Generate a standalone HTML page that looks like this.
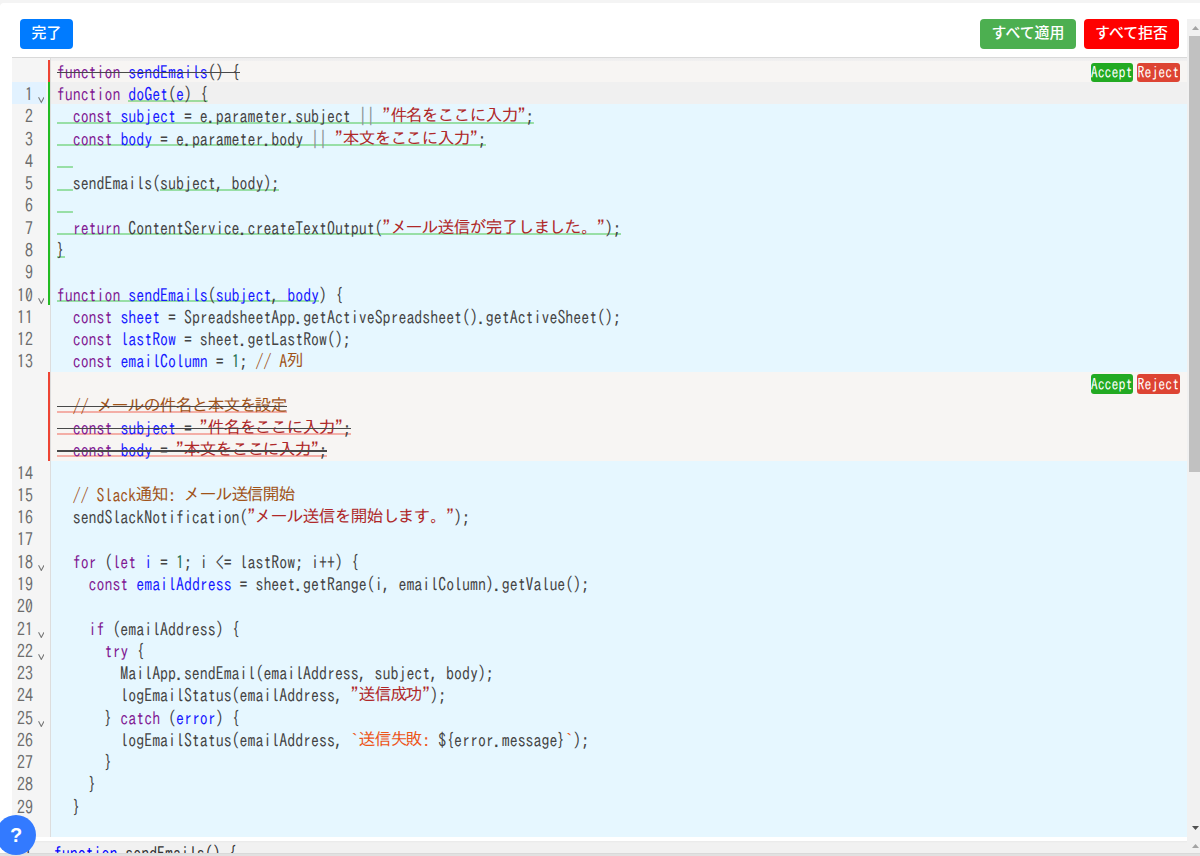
<!DOCTYPE html>
<html lang="ja">
<head>
<meta charset="utf-8">
<title>Diff</title>
<style>
html,body{margin:0;padding:0;}
body{width:1200px;height:856px;overflow:hidden;position:relative;background:#f4f4f4;
  font-family:"Liberation Sans","Noto Sans CJK JP",sans-serif;color:#212529;}
.panel{position:absolute;left:0;top:2.7px;width:1200px;height:850.3px;background:#fff;border-radius:4px 0 0 0;}
.btn{position:absolute;top:19px;height:30px;box-sizing:border-box;border:0;border-radius:4px;color:#fff;
  font-family:"Liberation Sans","Noto Sans CJK JP",sans-serif;font-size:14.9px;font-weight:500;line-height:29px;text-align:center;padding:0;}
.b-done{left:20px;width:53px;background:#007bff;}
.b-apply{left:980px;width:96px;background:#4caf50;}
.b-reject{left:1084px;width:95px;background:#ff0000;}

/* editor */
.editor{position:absolute;left:12px;top:57px;width:1175px;height:779.75px;overflow:hidden;background:#fff;
  font-family:"IPAGothic","Noto Sans Mono CJK JP","Liberation Mono",monospace;font-size:15.907px;line-height:22.270px;color:#444;}
.gutter{position:absolute;left:0;top:0;width:37.5px;height:100%;background:#f5f5f5;border-right:1px solid #ddd;}
.rows{position:absolute;left:0;top:2.9px;width:100%;}
.row{position:relative;height:22.270px;white-space:pre;}
.ln{position:absolute;left:0;top:0;width:21px;text-align:right;color:#6c6c6c;}
.fold{position:absolute;left:25.9px;top:15px;width:6.6px;height:6.4px;}
.mk{position:absolute;left:36px;top:0;width:2.2px;height:100%;}
.mk.g{background:#22bb22;}
.mk.r{background:#ee4433;}
.code{position:absolute;left:38.5px;right:0;top:0;height:100%;padding-left:6.3px;background:#e6f7ff;}
.row.del .code{background:#f7f5f3;}
.row.act .code{background:#f0f0f0;}
.row.act .lnbg{position:absolute;left:0;top:0;width:34.2px;height:100%;background:#e2f2ff;}
.k{color:#811a93}.d{color:#171aff}.s{color:#af2829}.c{color:#a05319}.n{color:#267355}.t{color:#ed5519}.o{color:#8d9499}
.ch{background:linear-gradient(rgba(34,187,34,.4),rgba(34,187,34,.4)) bottom/100% 2px no-repeat;padding-bottom:.5px;}
.dl{position:relative;}
.dl::after{content:"";position:absolute;left:0;right:0;top:8.7px;height:1.5px;background:#484848;}
b.j{font-weight:normal;display:inline-block;transform:scale(1.07,1.06);transform-origin:50% 80%;}
b.x{font-weight:normal;display:inline-block;transform:scaleY(1.16);transform-origin:0 24%;}
.dt{background:linear-gradient(rgba(238,68,51,.4),rgba(238,68,51,.4)) bottom/100% 2px no-repeat;padding-bottom:0;}
.cb{position:absolute;right:0;top:3px;height:19px;width:100px;}
.cb span{position:absolute;top:0;height:19.4px;line-height:19.4px;border-radius:3px;color:#fff;text-align:center;
  font-family:"IPAGothic","Noto Sans Mono CJK JP","Liberation Mono",monospace;font-size:13.9px;white-space:nowrap;overflow:hidden;}
.cb.c2{top:2.4px;}
.cb.c2 span{height:19.8px;line-height:19px;}
.cb .a{left:3.6px;width:42.5px;box-sizing:border-box;padding-right:.6px;}
.cb .j{left:50.1px;width:42.9px;box-sizing:border-box;padding-right:.4px;}
.cb .a{background:#22aa22;}
.cb .j{background:#dd4433;}
.shadow{position:absolute;left:12px;top:57px;width:1175px;height:4.2px;background:linear-gradient(#d9d9d9,#d9d9d9) 0 0/100% 1.2px no-repeat,linear-gradient(#ececee,#f1f0f0) 38.5px 0/100% 100% no-repeat;}

/* scrollbars */
.sb{position:absolute;left:1187px;width:17px;background:#f1f1f1;}
.sb1{top:19px;height:818px;}
.sb2{top:837px;height:40px;}
.thumb{position:absolute;left:2px;width:13px;background:#c1c1c1;}
.arr{position:absolute;left:5px;width:7px;height:4px;}

/* bottom */
.strip{position:absolute;left:12px;top:841px;width:1175px;height:12px;background:#f1f1f1;overflow:hidden;
  font-family:"IPAGothic","Noto Sans Mono CJK JP","Liberation Mono",monospace;font-size:15.907px;line-height:22.270px;color:#333;white-space:pre;}
.strip .sh{position:absolute;left:0;top:0;width:100%;height:2px;background:linear-gradient(rgba(0,0,0,.035),rgba(0,0,0,0));}
.strip .t1{position:absolute;left:41.8px;top:-0.5px;}
.strip .n1{position:absolute;left:12px;top:-0.5px;color:#333;}
.botband{position:absolute;left:0;top:853px;width:1200px;height:3px;background:#e1e1e1;border-top:1px solid #d9d9d9;box-sizing:border-box;}
.help{position:absolute;left:-4px;top:815px;width:40px;height:40px;border-radius:50%;background:#337aff;color:#fff;
  font-family:"Liberation Sans",sans-serif;font-weight:bold;font-size:20px;line-height:40px;text-align:center;}
</style>
</head>
<body>
<div class="panel"></div>
<div class="btn b-done">完了</div>
<div class="btn b-apply">すべて適用</div>
<div class="btn b-reject">すべて拒否</div>

<div class="editor">
<div class="gutter"></div>
<div class="rows">
<div class="row del first"><i class="mk r"></i><div class="code"><span class="dl"><span class="k"><b class="x">function</b></span> <span class="d"><b class="x">sendEmails</b></span><b class="x">() {</b></span><div class="cb"><span class="a"><b class="x">Accept</b></span><span class="j"><b class="x">Reject</b></span></div></div></div>
<div class="row act"><i class="lnbg"></i><span class="ln"><b class="x">1</b></span><svg class="fold" viewBox="0 0 7 7"><path d="M0.5 0.3 L3.5 6 L6.5 0.3" fill="none" stroke="#757575" stroke-width="1.15"/></svg><i class="mk g"></i><div class="code"><span class="k"><b class="x">function</b></span> <span class="ch"><span class="d"><b class="x">doGet</b></span><b class="x">(</b><span class="d"><b class="x">e</b></span><b class="x">) {</b></span></div></div>
<div class="row"><span class="ln"><b class="x">2</b></span><i class="mk g"></i><div class="code"><span class="ch">  <span class="k"><b class="x">const</b></span> <span class="d"><b class="x">subject</b></span><b class="x"> = e.parameter.subject </b><span class="o"><b class="x">||</b></span> <span class="s"><b class="x">"</b><b class="j">件</b><b class="j">名</b><b class="j">を</b><b class="j">こ</b><b class="j">こ</b><b class="j">に</b><b class="j">入</b><b class="j">力</b><b class="x">"</b></span><b class="x">;</b></span></div></div>
<div class="row"><span class="ln"><b class="x">3</b></span><i class="mk g"></i><div class="code"><span class="ch">  <span class="k"><b class="x">const</b></span> <span class="d"><b class="x">body</b></span><b class="x"> = e.parameter.body </b><span class="o"><b class="x">||</b></span> <span class="s"><b class="x">"</b><b class="j">本</b><b class="j">文</b><b class="j">を</b><b class="j">こ</b><b class="j">こ</b><b class="j">に</b><b class="j">入</b><b class="j">力</b><b class="x">"</b></span><b class="x">;</b></span></div></div>
<div class="row"><span class="ln"><b class="x">4</b></span><i class="mk g"></i><div class="code"><span class="ch">  </span></div></div>
<div class="row"><span class="ln"><b class="x">5</b></span><i class="mk g"></i><div class="code"><span class="ch">  </span><b class="x">sendEmails(</b><span class="ch"><b class="x">subject, body);</b></span></div></div>
<div class="row"><span class="ln"><b class="x">6</b></span><i class="mk g"></i><div class="code"><span class="ch">  </span></div></div>
<div class="row"><span class="ln"><b class="x">7</b></span><i class="mk g"></i><div class="code"><span class="ch">  <span class="k"><b class="x">return</b></span><b class="x"> ContentService.createTextOutput(</b><span class="s"><b class="x">"</b><b class="j">メ</b><b class="j">ー</b><b class="j">ル</b><b class="j">送</b><b class="j">信</b><b class="j">が</b><b class="j">完</b><b class="j">了</b><b class="j">し</b><b class="j">ま</b><b class="j">し</b><b class="j">た</b>。<b class="x">"</b></span><b class="x">);</b></span></div></div>
<div class="row"><span class="ln"><b class="x">8</b></span><i class="mk g"></i><div class="code"><span class="ch"><b class="x">}</b></span></div></div>
<div class="row"><span class="ln"><b class="x">9</b></span><i class="mk g"></i><div class="code"></div></div>
<div class="row"><span class="ln"><b class="x">10</b></span><svg class="fold" viewBox="0 0 7 7"><path d="M0.5 0.3 L3.5 6 L6.5 0.3" fill="none" stroke="#757575" stroke-width="1.15"/></svg><i class="mk g"></i><div class="code"><span class="ch"><span class="k"><b class="x">function</b></span> <span class="d"><b class="x">sendEmails</b></span><b class="x">(</b><span class="d"><b class="x">subject</b></span><b class="x">, </b><span class="d"><b class="x">body</b></span></span><b class="x">) {</b></div></div>
<div class="row"><span class="ln"><b class="x">11</b></span><div class="code">  <span class="k"><b class="x">const</b></span> <span class="d"><b class="x">sheet</b></span><b class="x"> = SpreadsheetApp.getActiveSpreadsheet().getActiveSheet();</b></div></div>
<div class="row"><span class="ln"><b class="x">12</b></span><div class="code">  <span class="k"><b class="x">const</b></span> <span class="d"><b class="x">lastRow</b></span><b class="x"> = sheet.getLastRow();</b></div></div>
<div class="row"><span class="ln"><b class="x">13</b></span><div class="code">  <span class="k"><b class="x">const</b></span> <span class="d"><b class="x">emailColumn</b></span><b class="x"> = </b><span class="n"><b class="x">1</b></span><b class="x">; </b><span class="c"><b class="x">// A</b><b class="j">列</b></span></div></div>
<div class="row del"><i class="mk r"></i><div class="code"><div class="cb c2"><span class="a"><b class="x">Accept</b></span><span class="j"><b class="x">Reject</b></span></div></div></div>
<div class="row del"><i class="mk r"></i><div class="code"><span class="dl"><span class="dt">  <span class="c"><b class="x">// </b><b class="j">メ</b><b class="j">ー</b><b class="j">ル</b><b class="j">の</b><b class="j">件</b><b class="j">名</b><b class="j">と</b><b class="j">本</b><b class="j">文</b><b class="j">を</b><b class="j">設</b><b class="j">定</b></span></span></span></div></div>
<div class="row del"><i class="mk r"></i><div class="code"><span class="dl"><span class="dt">  <span class="k"><b class="x">const</b></span> <span class="d"><b class="x">subject</b></span><b class="x"> = </b><span class="s"><b class="x">"</b><b class="j">件</b><b class="j">名</b><b class="j">を</b><b class="j">こ</b><b class="j">こ</b><b class="j">に</b><b class="j">入</b><b class="j">力</b><b class="x">"</b></span><b class="x">;</b></span></span></div></div>
<div class="row del"><i class="mk r"></i><div class="code"><span class="dl"><span class="dt">  <span class="k"><b class="x">const</b></span> <span class="d"><b class="x">body</b></span><b class="x"> = </b><span class="s"><b class="x">"</b><b class="j">本</b><b class="j">文</b><b class="j">を</b><b class="j">こ</b><b class="j">こ</b><b class="j">に</b><b class="j">入</b><b class="j">力</b><b class="x">"</b></span><b class="x">;</b></span></span></div></div>
<div class="row"><span class="ln"><b class="x">14</b></span><div class="code"></div></div>
<div class="row"><span class="ln"><b class="x">15</b></span><div class="code">  <span class="c"><b class="x">// Slack</b><b class="j">通</b><b class="j">知</b><b class="x">: </b><b class="j">メ</b><b class="j">ー</b><b class="j">ル</b><b class="j">送</b><b class="j">信</b><b class="j">開</b><b class="j">始</b></span></div></div>
<div class="row"><span class="ln"><b class="x">16</b></span><div class="code"><b class="x">  sendSlackNotification(</b><span class="s"><b class="x">"</b><b class="j">メ</b><b class="j">ー</b><b class="j">ル</b><b class="j">送</b><b class="j">信</b><b class="j">を</b><b class="j">開</b><b class="j">始</b><b class="j">し</b><b class="j">ま</b><b class="j">す</b>。<b class="x">"</b></span><b class="x">);</b></div></div>
<div class="row"><span class="ln"><b class="x">17</b></span><div class="code"></div></div>
<div class="row"><span class="ln"><b class="x">18</b></span><svg class="fold" viewBox="0 0 7 7"><path d="M0.5 0.3 L3.5 6 L6.5 0.3" fill="none" stroke="#757575" stroke-width="1.15"/></svg><div class="code">  <span class="k"><b class="x">for</b></span><b class="x"> (</b><span class="k"><b class="x">let</b></span> <span class="d"><b class="x">i</b></span><b class="x"> = </b><span class="n"><b class="x">1</b></span><b class="x">; i &lt;= lastRow; i++) {</b></div></div>
<div class="row"><span class="ln"><b class="x">19</b></span><div class="code">    <span class="k"><b class="x">const</b></span> <span class="d"><b class="x">emailAddress</b></span><b class="x"> = sheet.getRange(i, emailColumn).getValue();</b></div></div>
<div class="row"><span class="ln"><b class="x">20</b></span><div class="code"></div></div>
<div class="row"><span class="ln"><b class="x">21</b></span><svg class="fold" viewBox="0 0 7 7"><path d="M0.5 0.3 L3.5 6 L6.5 0.3" fill="none" stroke="#757575" stroke-width="1.15"/></svg><div class="code">    <span class="k"><b class="x">if</b></span><b class="x"> (emailAddress) {</b></div></div>
<div class="row"><span class="ln"><b class="x">22</b></span><svg class="fold" viewBox="0 0 7 7"><path d="M0.5 0.3 L3.5 6 L6.5 0.3" fill="none" stroke="#757575" stroke-width="1.15"/></svg><div class="code">      <span class="k"><b class="x">try</b></span><b class="x"> {</b></div></div>
<div class="row"><span class="ln"><b class="x">23</b></span><div class="code"><b class="x">        MailApp.sendEmail(emailAddress, subject, body);</b></div></div>
<div class="row"><span class="ln"><b class="x">24</b></span><div class="code"><b class="x">        logEmailStatus(emailAddress, </b><span class="s"><b class="x">"</b><b class="j">送</b><b class="j">信</b><b class="j">成</b><b class="j">功</b><b class="x">"</b></span><b class="x">);</b></div></div>
<div class="row"><span class="ln"><b class="x">25</b></span><svg class="fold" viewBox="0 0 7 7"><path d="M0.5 0.3 L3.5 6 L6.5 0.3" fill="none" stroke="#757575" stroke-width="1.15"/></svg><div class="code"><b class="x">      } </b><span class="k"><b class="x">catch</b></span><b class="x"> (</b><span class="d"><b class="x">error</b></span><b class="x">) {</b></div></div>
<div class="row"><span class="ln"><b class="x">26</b></span><div class="code"><b class="x">        logEmailStatus(emailAddress, </b><span class="t"><b class="x">`</b><b class="j">送</b><b class="j">信</b><b class="j">失</b><b class="j">敗</b><b class="x">: </b></span><b class="x">${error.message}</b><span class="t"><b class="x">`</b></span><b class="x">);</b></div></div>
<div class="row"><span class="ln"><b class="x">27</b></span><div class="code"><b class="x">      }</b></div></div>
<div class="row"><span class="ln"><b class="x">28</b></span><div class="code"><b class="x">    }</b></div></div>
<div class="row"><span class="ln"><b class="x">29</b></span><div class="code"><b class="x">  }</b></div></div>
<div class="row"><span class="ln"><b class="x">30</b></span><div class="code"></div></div>
</div>
</div>
<div class="shadow"></div>

<div class="sb sb1">
<svg class="arr" style="top:7px" viewBox="0 0 7 4"><path d="M0 4 L3.5 0 L7 4 Z" fill="#a3a3a3"/></svg>
<div class="thumb" style="top:17px;height:436px"></div>
<svg class="arr" style="top:807px" viewBox="0 0 7 4"><path d="M0 0 L3.5 4 L7 0 Z" fill="#505050"/></svg>
</div>
<div class="sb sb2">
<svg class="arr" style="top:7px" viewBox="0 0 7 4"><path d="M0 4 L3.5 0 L7 4 Z" fill="#a3a3a3"/></svg>
</div>

<div class="strip"><div class="sh"></div><span class="n1"><b class="x">1</b></span><span class="t1"><span style="color:#00f"><b class="x">function</b></span> <b class="x">sendEmails() {</b></span></div>
<div class="botband"></div>
<div class="help">?</div>

</body>
</html>
